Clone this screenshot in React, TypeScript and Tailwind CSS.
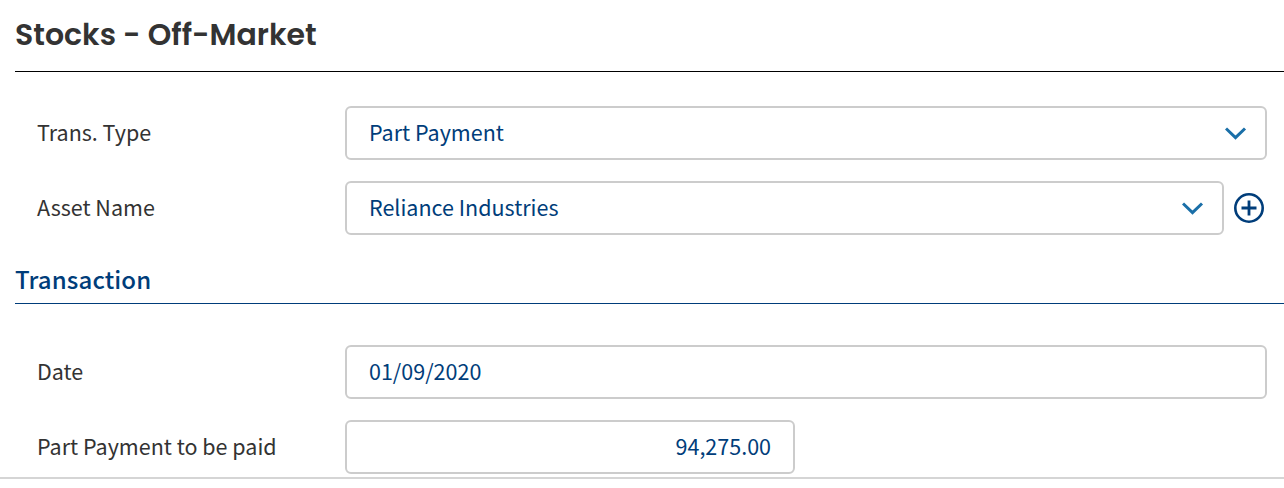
import type { ReactNode } from 'react';

function Chevron() {
  return (
    <svg width="22" height="14" viewBox="0 0 22 14" fill="none" className="mt-[2px] shrink-0" aria-hidden="true">
      <path d="M1 1.5 L10.5 10.7 L20 1.5" stroke="#1a6fa8" strokeWidth="3" />
    </svg>
  );
}

function PlusCircle() {
  return (
    <svg width="30" height="30" viewBox="0 0 30 30" fill="none" stroke="#003d7a" aria-hidden="true">
      <circle cx="15" cy="15" r="13.7" strokeWidth="2.6" />
      <path d="M7.5 15H22.5M15 7.5V22.5" strokeWidth="2.8" />
    </svg>
  );
}

function Row({ label, children }: { label: string; children: ReactNode }) {
  return (
    <div className="flex h-[54px] items-center">
      <span className="w-[308px] shrink-0 whitespace-nowrap pb-[2px] text-[#333333]">{label}</span>
      {children}
    </div>
  );
}

const field = 'flex h-[54px] items-center rounded-md border-2 border-[#cccccc] pl-[22px] text-[#003d7a]';

export default function App() {
  return (
    <main className="flex h-[488px] flex-col overflow-hidden bg-white font-['Noto_Sans_CJK_SC',sans-serif] text-[21.5px] leading-[32px]">
      <h1 className="ml-[15px] flex h-[72px] shrink-0 items-center border-b border-black pb-[1px] font-['Poppins','Inter',sans-serif] text-[30px] font-semibold leading-[40px] text-[#333333]">
        Stocks - Off-Market
      </h1>
      <section className="mt-[34px] flex flex-col gap-[21px] pl-[37px]">
        <Row label="Trans. Type">
          <div className={`${field} w-[922px] justify-between pr-[18px]`}>
            <span className="pb-[2px]">Part Payment</span>
            <Chevron />
          </div>
        </Row>
        <Row label="Asset Name">
          <div className={`${field} w-[879px] justify-between pr-[18px]`}>
            <span className="pb-[2px]">Reliance Industries</span>
            <Chevron />
          </div>
          <button type="button" aria-label="Add asset" className="ml-[10px]">
            <PlusCircle />
          </button>
        </Row>
      </section>
      <h2 className="ml-[15px] mt-[25px] h-[44px] shrink-0 border-b border-[#003d7a] pt-[3px] text-[24px] font-medium tracking-[0.12px] text-[#003d7a]">
        Transaction
      </h2>
      <section className="mt-[41px] flex flex-col gap-[21px] pl-[37px]">
        <Row label="Date">
          <div className={`${field} w-[922px]`}>
            <span className="pb-[2px]">01/09/2020</span>
          </div>
        </Row>
        <Row label="Part Payment to be paid">
          <div className={`${field} w-[450px] justify-end pr-[22px]`}>
            <span className="pb-[2px]">94,275.00</span>
          </div>
        </Row>
      </section>
      <div className="mt-[3px] h-[2px] shrink-0 bg-[#d5d5d5]" />
    </main>
  );
}
